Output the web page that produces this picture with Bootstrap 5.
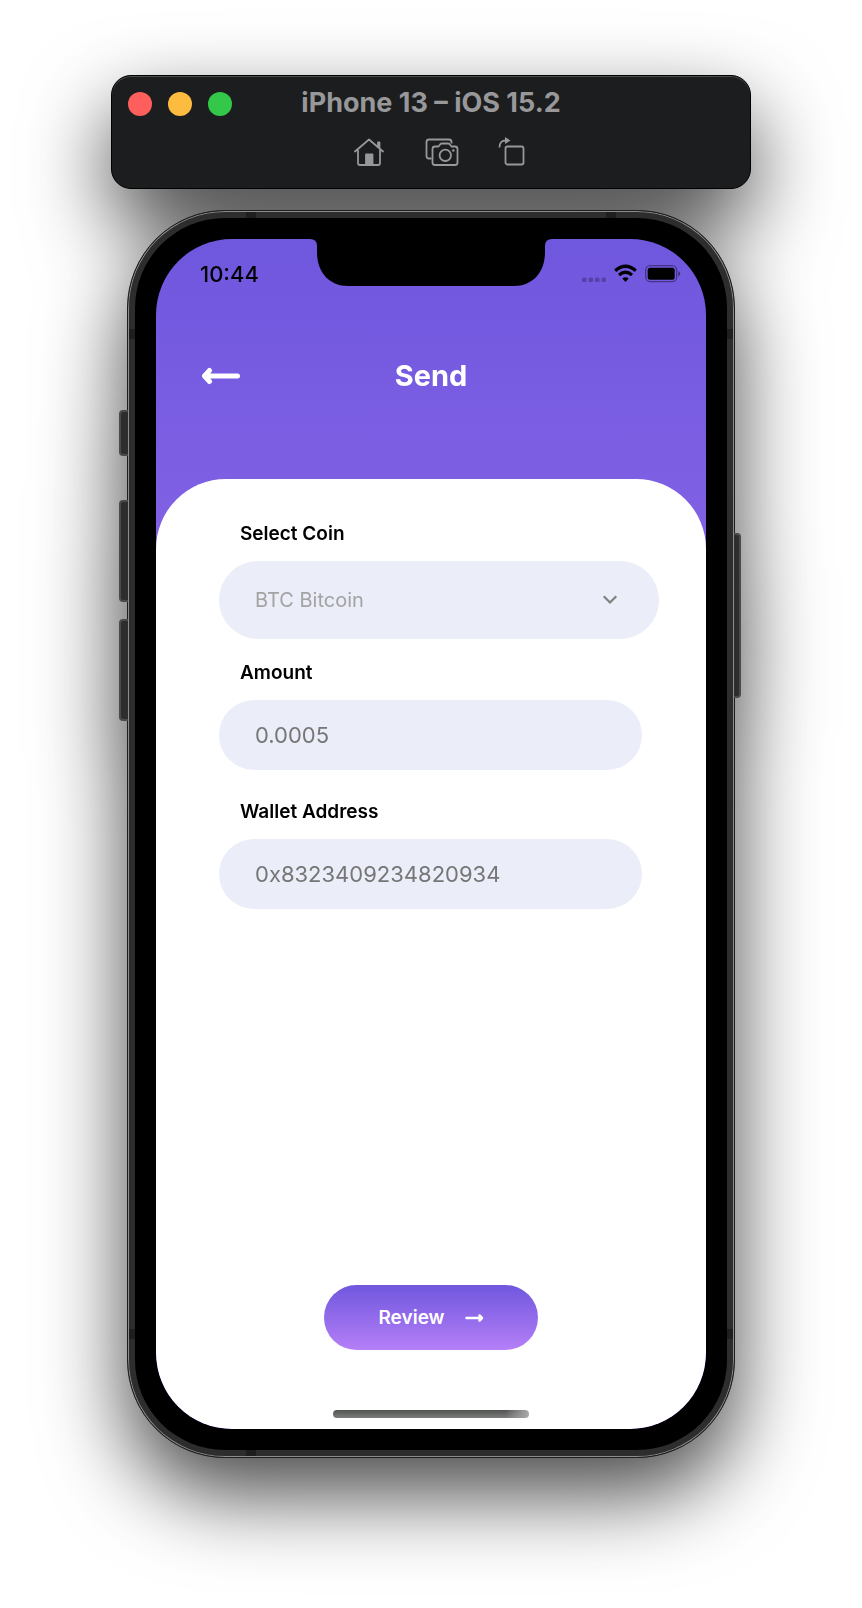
<!DOCTYPE html>
<html lang="en">
<head>
<meta charset="utf-8">
<meta name="viewport" content="width=device-width, initial-scale=1">
<title>iPhone 13 – iOS 15.2</title>
<link href="https://cdn.jsdelivr.net/npm/bootstrap@5.3.0/dist/css/bootstrap.min.css" rel="stylesheet">
<style>
  body { background: #fff; font-family: Inter, "Liberation Sans", sans-serif; color: #000; }
  .simulator { max-width: 640px; padding: 75px 0 150px; filter: drop-shadow(0 36px 42px rgba(0,0,0,.72)); }

  /* Simulator window bar */
  .sim-bar { background: #1c1d1e; border: 1px solid #000; border-radius: 20px; box-shadow: inset 0 1px 0 #4c4d4d; padding: 8px 16px 20px; color: #98989b; }
  .sim-head { display: grid; grid-template-columns: 1fr auto 1fr; align-items: center; min-height: 40px; }
  .sim-title { font-size: 27px; line-height: 36px; font-weight: 700; margin: 0; padding-bottom: 2px; }
  .light { width: 24px; height: 24px; border: 0; padding: 0; border-radius: 50%; }
  .light-close { background: #ff5f5c; }
  .light-min { background: #fdbc40; }
  .light-zoom { background: #34c84a; }
  .sim-tools { gap: 38px; margin-top: 12px; padding-left: 16px; }
  .sim-tools button { background: none; border: 0; padding: 0; color: inherit; line-height: 0; }

  /* Phone body */
  .phone { max-width: 608px; margin-top: 21px; background: #000; border: 1px solid #1e1e1e; border-radius: 98px; box-shadow: inset 0 0 0 1px #8c8c8c, inset 0 0 0 7px #2d2d2d; padding: 28px; }
  .band { position: absolute; background: #1e1e1e; }
  .band-v { width: 10px; height: 6px; }
  .band-h { width: 6px; height: 10px; }
  .band-l { left: 19.5%; } .band-r { right: 19.5%; }
  .band-t { top: 1px; } .band-b { bottom: 1px; }
  .band-hl { left: 1px; } .band-hr { right: 1px; }
  .band-ht { top: 118px; } .band-hb { bottom: 118px; }
  .side-key { position: absolute; background: #2d2d2d; border: 2px solid #4a4a4a; width: 9px; left: -9px; border-right: 0; border-radius: 4px 0 0 4px; }
  .key-mute { top: 199px; height: 46px; }
  .key-up { top: 289px; height: 102px; }
  .key-down { top: 408px; height: 102px; }
  .key-power { top: 322px; height: 165px; left: auto; right: -7px; width: 7px; border-left: 0; border-right: 2px solid #4a4a4a; border-radius: 0 4px 4px 0; }

  /* App screen */
  .app-screen { min-height: 1190px; border-radius: 76px; background: linear-gradient(#6f57de, #b57ff7); }
  .status-side { flex: 1 1 0; min-width: 0; padding-top: 22px; }
  .clock { font-size: 22px; line-height: 26px; font-weight: 500; padding-left: 44px; }
  .status-icons { gap: 7px; padding-right: 25px; }
  .app-head { display: grid; grid-template-columns: 1fr auto 1fr; padding: 0 45px; margin-top: 67px; align-items: center; }
  .app-head button { background: none; border: 0; padding: 0; line-height: 0; justify-self: start; }
  .app-title { font-size: 29px; line-height: 44px; font-weight: 700; margin: 0; }
  .sheet { background: #fff; border-radius: 70px 70px 76px 76px; margin-top: 81px; padding: 41px 47px 11px 63px; }
  .field-label { font-size: 19px; line-height: 28px; font-weight: 600; padding-left: 21px; margin-bottom: 13px; display: block; }
  .pill, .pill:focus { background-color: #ebeef9; border: 0; border-radius: 40px; padding: 0 36px; color: #767676; font-size: 22px; line-height: 28px; height: 70px; }
  .pill::placeholder { color: #767676; opacity: 1; }
  .pill-slot { padding-right: 17px; }
  .pill-amount { margin-bottom: 28px; }
  .pill-select, .pill-select:focus { height: 78px; font-size: 20px; color: #a3a3a3; background-image: url("data:image/svg+xml,%3Csvg xmlns='http://www.w3.org/2000/svg' viewBox='0 0 16 12'%3E%3Cpath d='M2.500 3l5.500 5.500L13.500 3' fill='none' stroke='%23808080' stroke-width='2.200' stroke-linecap='square'/%3E%3C/svg%3E"); background-size: 16px 12px; background-position: right 41px center; }
  .review { width: 214px; height: 65px; border: 0; border-radius: 33px; background: linear-gradient(#6f57de, #b57ff7); color: #fff; font-size: 19px; line-height: 28px; font-weight: 600; gap: 20px; }
  .bottom-area { padding-right: 16px; }
  .home-bar { width: 196px; height: 8px; border-radius: 4px; margin-top: 60px; background: linear-gradient(90deg, transparent 88%, #aaa 100%), linear-gradient(#525552, #7c7c7c); }
</style>
</head>
<body>
<main class="simulator container-fluid mx-auto">
  <header class="sim-bar">
    <div class="sim-head">
      <div class="d-flex gap-3">
        <button class="light light-close" aria-label="Close"></button>
        <button class="light light-min" aria-label="Minimize"></button>
        <button class="light light-zoom" aria-label="Zoom"></button>
      </div>
      <h1 class="sim-title">iPhone 13 – iOS 15.2</h1>
    </div>
    <div class="sim-tools d-flex justify-content-center">
      <button aria-label="Home">
        <svg width="34" height="32" viewBox="0 0 34 32" fill="none" stroke="currentColor" stroke-width="1.800" stroke-linecap="round" stroke-linejoin="round"><path d="M3 15.500 17 3.500l14 12M6 14v13q0 2 2 2h18q2 0 2-2V14M27.500 12V6.500H26V11"/><path d="M14 29V18.500h6.500V29z" fill="currentColor"/></svg>
      </button>
      <button aria-label="Screenshot">
        <svg width="36" height="32" viewBox="0 0 36 32" fill="none" stroke="currentColor" stroke-width="1.800" stroke-linejoin="round"><path d="M7.500 22.500H5q-2.500 0-2.500-2.500V6q0-2.500 2.500-2.500h20q2.500 0 2.500 2.500v1.500"/><path d="M11 10.500h3.500l2-2.500q.5-.5 1.500-.5h6q1 0 1.500.5l2 2.500H31q2.500 0 2.500 2.500v13.500q0 2.500-2.500 2.500H11q-2.500 0-2.500-2.500V13q0-2.500 2.500-2.500z"/><circle cx="21.300" cy="19.300" r="5.700"/><circle cx="29.300" cy="14.500" r="1.300" fill="currentColor" stroke="none"/></svg>
      </button>
      <button aria-label="Rotate">
        <svg width="28" height="32" viewBox="0 0 28 32" fill="none" stroke="currentColor" stroke-width="1.800"><rect x="7.500" y="10.500" width="18" height="18" rx="2"/><path d="M1.500 11.500Q1.300 4.500 8 4.500"/><path d="M7 1l5.500 3.500L7 8z" fill="currentColor" stroke="none"/></svg>
      </button>
    </div>
  </header>

  <section class="phone position-relative mx-auto" aria-label="Phone">
    <span class="side-key key-mute"></span><span class="side-key key-up"></span><span class="side-key key-down"></span><span class="side-key key-power"></span>
    <span class="band band-v band-l band-t"></span><span class="band band-v band-r band-t"></span>
    <span class="band band-v band-l band-b"></span>
    <span class="band band-h band-hl band-ht"></span><span class="band band-h band-hr band-ht"></span>
    <span class="band band-h band-hl band-hb"></span><span class="band band-h band-hr band-hb"></span>

    <div class="app-screen d-flex flex-column overflow-hidden">
      <div class="d-flex align-items-start">
        <div class="status-side"><div class="clock">10:44</div></div>
        <svg width="242" height="47" viewBox="0 0 242 47" aria-hidden="true"><path d="M0 0Q7 0 7 7V13C7 34 20 47 38 47H204C222 47 235 34 235 13V7Q235 0 242 0z"/></svg>
        <div class="status-side">
          <div class="status-icons d-flex justify-content-end">
            <svg width="25" height="26" viewBox="0 0 25 26" fill="#000" fill-opacity=".25"><rect x="0" y="16.500" width="4.500" height="4.500" rx="1.500"/><rect x="6.500" y="16.500" width="4.500" height="4.500" rx="1.500"/><rect x="13" y="16.500" width="4.500" height="4.500" rx="1.500"/><rect x="19.500" y="16.500" width="4.500" height="4.500" rx="1.500"/></svg>
            <svg width="24" height="26" viewBox="0 0 24 26" fill="none" stroke="#000" stroke-width="3.200"><path d="M1.200 9.700Q11.500.800 21.800 9.700M5 14Q11.500 8.500 18 14"/><path d="M8.300 17.500Q11.500 14.800 14.700 17.500L11.500 21z" fill="#000" stroke="none"/></svg>
            <svg width="36" height="26" viewBox="0 0 36 26"><rect x=".7" y="4.700" width="31" height="16" rx="4.500" fill="none" stroke="#000" stroke-opacity=".4" stroke-width="1.300"/><rect x="2.700" y="6.700" width="27" height="12" rx="2.500"/><path d="M33.300 10.200q2 .8 2 2.500t-2 2.500z" fill-opacity=".45"/></svg>
          </div>
        </div>
      </div>

      <div class="app-head text-white">
        <button aria-label="Back"><svg width="40" height="18" viewBox="0 0 40 18" fill="none" stroke="#fff" stroke-width="5" stroke-linecap="round" stroke-linejoin="round"><path d="M36.500 9H5M8.500 3.500 3.500 9l5 5.500"/></svg></button>
        <h2 class="app-title">Send</h2>
      </div>

      <form class="sheet flex-grow-1 d-flex flex-column" onsubmit="return false">
        <div class="mb-3 pb-1">
          <label class="field-label" for="coin">Select Coin</label>
          <select class="form-select pill pill-select" id="coin"><option>BTC Bitcoin</option></select>
        </div>
        <div class="pill-slot pill-amount">
          <label class="field-label" for="amount">Amount</label>
          <input class="form-control pill" id="amount" type="text" inputmode="decimal" placeholder="0.0005">
        </div>
        <div class="pill-slot">
          <label class="field-label" for="wallet">Wallet Address</label>
          <input class="form-control pill" id="wallet" type="text" placeholder="0x8323409234820934">
        </div>
        <div class="bottom-area mt-auto d-flex flex-column align-items-center">
          <button class="review d-flex align-items-center justify-content-center" type="submit">Review
            <svg width="19" height="12" viewBox="0 0 19 12" fill="none" stroke="#fff" stroke-width="2.500" stroke-linecap="round" stroke-linejoin="round"><path d="M1.500 6h15M14.500 3.500 17 6l-2.500 2.500"/></svg>
          </button>
          <div class="home-bar"></div>
        </div>
      </form>
    </div>
  </section>
</main>
<script src="https://cdn.jsdelivr.net/npm/bootstrap@5.3.0/dist/js/bootstrap.bundle.min.js"></script>
</body>
</html>
